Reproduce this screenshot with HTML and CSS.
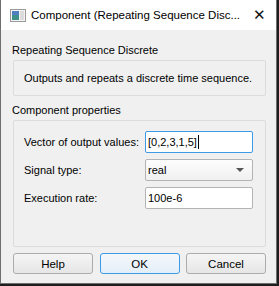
FILE: index.html
```html
<!DOCTYPE html>
<html lang="en">
<head>
<meta charset="UTF-8">
<title>Component (Repeating Sequence Discrete)</title>
<link rel="stylesheet" href="styles.css">
</head>
<body>

<div class="window">
  <div class="titlebar">
    <svg class="app-icon" width="16" height="13" viewBox="0 0 16 13">
      <rect x="0.5" y="0.5" width="15" height="12" fill="#f4f4f4" stroke="#9a9a9a"/>
      <rect x="2" y="2" width="7" height="9" fill="#3f8f8a"/>
      <rect x="2" y="2" width="7" height="4" fill="#4f7fc0"/>
      <rect x="10" y="2" width="4" height="9" fill="#dcdcdc"/>
    </svg>
    <span class="title">Component (Repeating Sequence Disc...</span>
    <span class="close">&#x2715;</span>
  </div>

  <div class="content">
    <div class="section-label">Repeating Sequence Discrete</div>
    <div class="group desc">Outputs and repeats a discrete time sequence.</div>

    <div class="section-label">Component properties</div>
    <div class="group props">
      <div class="row">
        <label>Vector of output values:</label>
        <div class="field focused">[0,2,3,1,5]<span class="caret"></span></div>
      </div>
      <div class="row">
        <label>Signal type:</label>
        <div class="field select">real<span class="arrow"></span></div>
      </div>
      <div class="row">
        <label>Execution rate:</label>
        <div class="field">100e-6</div>
      </div>
    </div>

    <div class="buttons">
      <button>Help</button>
      <button class="default">OK</button>
      <button>Cancel</button>
    </div>
  </div>
</div>

</body>
</html>
```

FILE: styles.css
```css
body {
  margin: 0;
  background: #1e1e1e;
  font-family: "Liberation Sans", Arial, sans-serif;
  font-size: 11px;
  color: #000;
}
.window {
  width: 275px;
  height: 283px;
  border: 1px solid #6f6f6f;
  border-top: none;
  background: #f0f0f0;
}
.titlebar {
  height: 30px;
  background: #fff;
  display: flex;
  align-items: center;
  padding-left: 9px;
}
.app-icon {
  margin-right: 5px;
}
.title {
  flex: 1;
  font-size: 11.5px;
  white-space: nowrap;
}
.close {
  width: 34px;
  text-align: center;
  font-size: 15px;
  color: #111;
}
.content {
  padding: 10px 10px 0 11px;
}
.section-label {
  height: 20px;
  line-height: 20px;
  white-space: nowrap;
}
.group {
  border: 1px solid #dcdcdc;
  border-radius: 2px;
  margin-left: 1px;
  white-space: nowrap;
}
.desc {
  height: 34px;
  line-height: 34px;
  padding-left: 10px;
  margin-bottom: 4px;
}
.props {
  height: 127px;
  padding: 10px 12px 0 10px;
  box-sizing: border-box;
  margin-bottom: 6px;
}
.row {
  display: flex;
  align-items: center;
  justify-content: space-between;
  margin-bottom: 6px;
}
.field {
  width: 104px;
  height: 20px;
  line-height: 20px;
  border: 1px solid #b4b4b4;
  border-radius: 2px;
  background: #fff;
  padding-left: 2px;
  position: relative;
}
.focused {
  border-color: #3c9ae6;
}
.caret {
  display: inline-block;
  width: 1px;
  height: 14px;
  background: #000;
  vertical-align: -3px;
  margin-left: 1px;
}
.select {
  background: linear-gradient(#fdfdfd, #f0f0f0);
}
.arrow {
  position: absolute;
  right: 8px;
  top: 8px;
  border-left: 4px solid transparent;
  border-right: 4px solid transparent;
  border-top: 4px solid #555;
}
.buttons {
  display: flex;
  justify-content: space-between;
  padding-left: 1px;
}
button {
  width: 80px;
  height: 21px;
  font: inherit;
  font-size: 11.5px;
  border: 1px solid #acacac;
  border-radius: 3px;
  background: linear-gradient(#f5f5f5, #e6e6e6);
  padding: 0;
}
button.default {
  border-color: #3c9ae6;
  background: linear-gradient(#f4f8fc, #e4eef8);
}
```
